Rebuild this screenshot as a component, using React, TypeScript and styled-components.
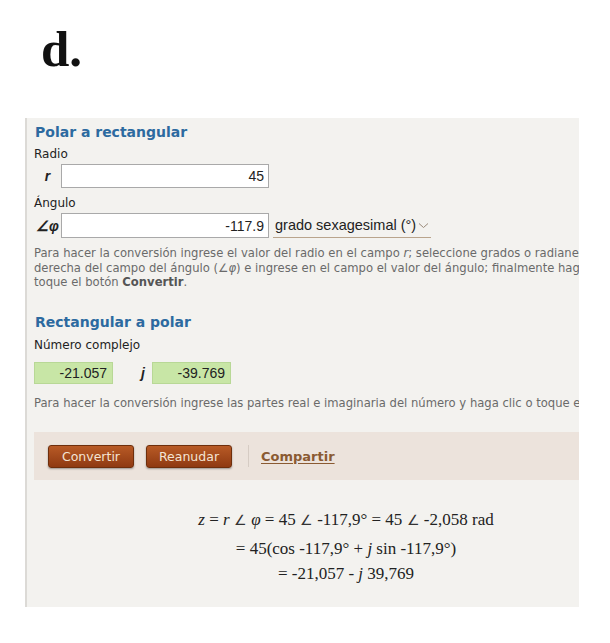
import React from "react";
import styled, { createGlobalStyle } from "styled-components";

const Global = createGlobalStyle`
  html, body { margin: 0; padding: 0; background: #fff; }
  body { font-family: "DejaVu Sans", Verdana, sans-serif; }
`;

const Page = styled.div`
  width: 610px;
  height: 643px;
  background: #fff;
  display: flex;
  flex-direction: column;
  overflow: hidden;
`;

const Letter = styled.div`
  font-family: "Liberation Serif", "Times New Roman", serif;
  font-weight: bold;
  font-size: 51px;
  line-height: 60px;
  color: #111;
  padding: 19px 0 0 41px;
  height: 118px;
  box-sizing: border-box;
`;

const Panel = styled.div`
  margin-left: 25px;
  width: 554px;
  height: 489px;
  background: #f3f2ef;
  border-left: 2px solid #dcdad6;
  overflow: hidden;
  padding: 4px 0 0 7px;
  box-sizing: border-box;
`;

const Inner = styled.div`
  width: 700px;
`;

const Heading = styled.h2<{ $top?: number }>`
  margin: ${(p) => p.$top ?? 0}px 0 0 0;
  font-size: 14px;
  font-weight: bold;
  color: #2c6aa0;
  line-height: 20px;
  padding-left: 1px;
`;

const Label = styled.div<{ $top?: number }>`
  font-size: 12px;
  color: #222;
  line-height: 14px;
  margin-top: ${(p) => p.$top ?? 0}px;
`;

const FieldRow = styled.div<{ $top?: number }>`
  display: flex;
  align-items: center;
  margin-top: ${(p) => p.$top ?? 0}px;
`;

const Sym = styled.span`
  width: 27px;
  text-align: center;
  font-family: "Liberation Sans", Arial, sans-serif;
  font-weight: bold;
  font-style: italic;
  font-size: 14px;
  color: #222;
`;

const TextInput = styled.div<{ $h?: number }>`
  width: 208px;
  height: ${(p) => p.$h ?? 24}px;
  box-sizing: border-box;
  border: 1px solid #a9a9a9;
  background: #fff;
  font-family: "Liberation Sans", Arial, sans-serif;
  font-size: 14px;
  color: #222;
  display: flex;
  align-items: center;
  justify-content: flex-end;
  padding-right: 4px;
`;

const SelectBox = styled.div`
  margin-left: 4px;
  height: 25px;
  display: flex;
  align-items: center;
  gap: 2px;
  font-family: "Liberation Sans", Arial, sans-serif;
  font-size: 14.5px;
  color: #222;
  border-bottom: 1px solid #b9a48c;
  padding: 0 2px;
  box-sizing: border-box;
`;

const Help = styled.p<{ $top?: number }>`
  margin: ${(p) => p.$top ?? 0}px 0 0 0;
  font-size: 11.6px;
  line-height: 14.5px;
  color: #6a6a6a;
  white-space: nowrap;
  b { color: #555; }
`;

const GreenRow = styled.div`
  display: flex;
  align-items: center;
  margin-top: 10px;
`;

const GreenInput = styled.div`
  width: 79px;
  height: 22px;
  box-sizing: border-box;
  background: #c8e6a6;
  border: 1px solid #b8d896;
  font-family: "Liberation Sans", Arial, sans-serif;
  font-size: 14px;
  color: #222;
  display: flex;
  align-items: center;
  justify-content: flex-end;
  padding-right: 5px;
`;

const JSym = styled.span`
  width: 39px;
  box-sizing: border-box;
  text-align: right;
  padding-right: 7px;
  font-family: "Liberation Sans", Arial, sans-serif;
  font-weight: bold;
  font-style: italic;
  font-size: 14px;
  color: #222;
`;

const ButtonBar = styled.div`
  margin-top: 22px;
  height: 48px;
  width: 560px;
  background: #ece3dc;
  display: flex;
  align-items: center;
  padding-left: 14px;
  box-sizing: border-box;
`;

const Button = styled.button`
  height: 23px;
  width: 86px;
  padding: 0;
  margin-right: 12px;
  border: 1px solid #6e2e0c;
  border-radius: 3px;
  background: linear-gradient(#b85a26, #8f3a12);
  box-shadow: 0 1px 2px rgba(0,0,0,0.35);
  color: #f4e4d4;
  font-family: "DejaVu Sans", Verdana, sans-serif;
  font-size: 12.5px;
  cursor: pointer;
`;

const Sep = styled.span`
  width: 1px;
  height: 22px;
  background: #d6ccc4;
  margin: 0 12px 0 4px;
`;

const ShareLink = styled.a`
  font-size: 13px;
  font-weight: bold;
  color: #8a5a32;
  text-decoration: underline;
  text-underline-offset: 2px;
`;

const Formula = styled.div`
  width: 624px;
  margin-top: 28px;
  display: flex;
  flex-direction: column;
  align-items: center;
  font-family: "Liberation Serif", "Times New Roman", serif;
  font-size: 17px;
  color: #222;
  i { font-style: italic; }
`;

const FLine = styled.div<{ $top?: number }>`
  line-height: 24px;
  margin-top: ${(p) => p.$top ?? 0}px;
  white-space: nowrap;
`;

const Angle = styled.span`
  font-family: "DejaVu Sans", sans-serif;
  font-weight: 300;
  font-size: 14px;
  color: #333;
`;

const Chevron = () => (
  <svg width="11" height="7" viewBox="0 0 11 7" fill="none">
    <path d="M1 1.5 L5.5 5.5 L10 1.5" stroke="#9a8a7a" strokeWidth="1" />
  </svg>
);

export default function App() {
  return (
    <Page>
      <Global />
      <Letter>d.</Letter>
      <Panel>
        <Inner>
          <Heading>Polar a rectangular</Heading>
          <Label $top={5}>Radio</Label>
          <FieldRow $top={3}>
            <Sym>r</Sym>
            <TextInput>45</TextInput>
          </FieldRow>
          <Label $top={8}>Ángulo</Label>
          <FieldRow $top={3}>
            <Sym>∠φ</Sym>
            <TextInput $h={25}>-117.9</TextInput>
            <SelectBox>
              grado sexagesimal (°)
              <Chevron />
            </SelectBox>
          </FieldRow>
          <Help $top={8}>
            Para hacer la conversión ingrese el valor del radio en el campo <i>r</i>; seleccione grados o radianes a la
            <br />
            derecha del campo del ángulo (<i>∠φ</i>) e ingrese en el campo el valor del ángulo; finalmente haga clic o
            <br />
            toque el botón <b>Convertir</b>.
          </Help>
          <Heading $top={22}>Rectangular a polar</Heading>
          <Label $top={6}>Número complejo</Label>
          <GreenRow>
            <GreenInput>-21.057</GreenInput>
            <JSym>j</JSym>
            <GreenInput>-39.769</GreenInput>
          </GreenRow>
          <Help $top={12}>
            Para hacer la conversión ingrese las partes real e imaginaria del número y haga clic o toque el botón Convertir.
          </Help>
          <ButtonBar>
            <Button>Convertir</Button>
            <Button>Reanudar</Button>
            <Sep />
            <ShareLink>Compartir</ShareLink>
          </ButtonBar>
          <Formula>
            <FLine>
              <i>z</i> = <i>r</i> <Angle>∠</Angle> <i>φ</i> = 45 <Angle>∠</Angle> -117,9° = 45 <Angle>∠</Angle> -2,058 rad
            </FLine>
            <FLine $top={5}>
              = 45(cos -117,9° + <i>j</i> sin -117,9°)
            </FLine>
            <FLine $top={1}>
              = -21,057 - <i>j</i> 39,769
            </FLine>
          </Formula>
        </Inner>
      </Panel>
    </Page>
  );
}
